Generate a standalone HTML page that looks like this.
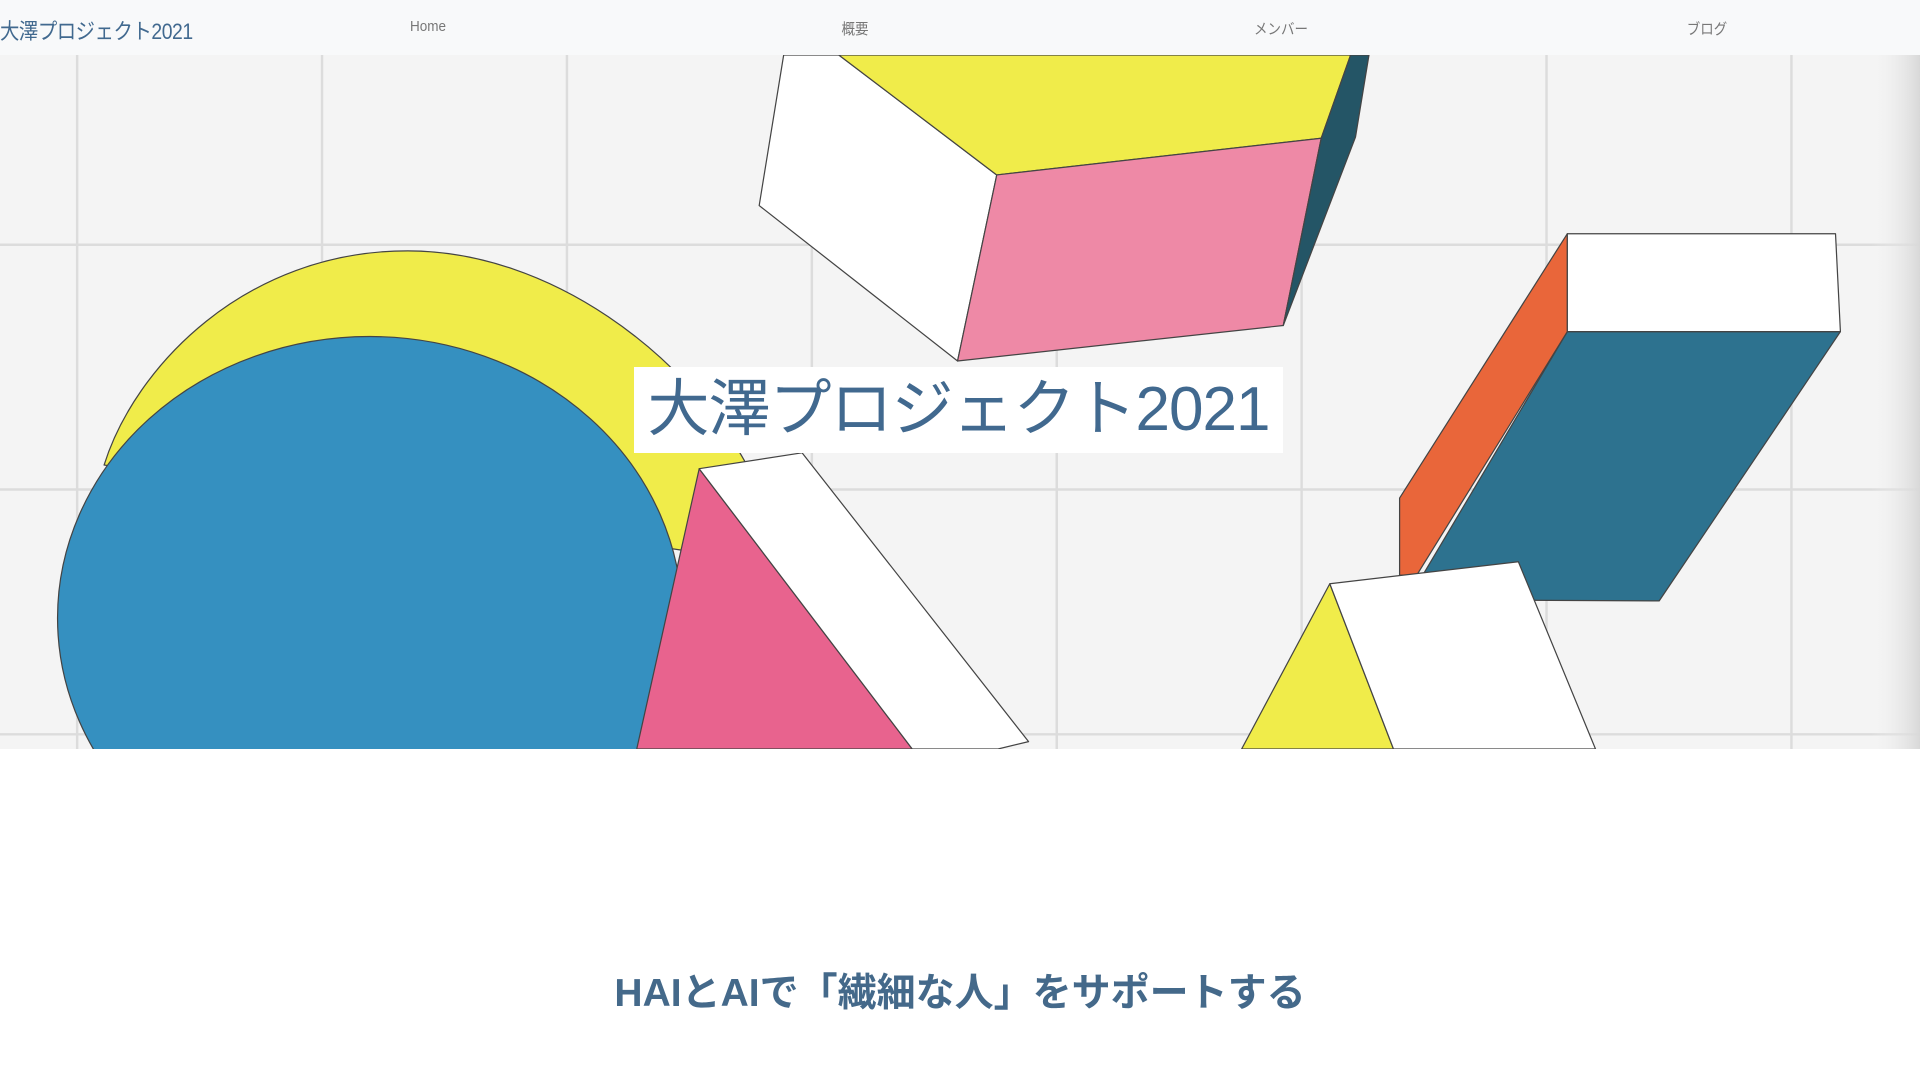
<!DOCTYPE html>
<html><head><meta charset="utf-8"><style>
*{margin:0;padding:0;box-sizing:border-box}
body{width:1920px;height:1080px;background:#fff;font-family:"Liberation Sans","Noto Sans CJK JP",sans-serif;overflow:hidden;position:relative}
nav{position:absolute;top:0;left:0;width:1920px;height:55px;background:#f8f9fa}
.logo{position:absolute;left:0;top:14px;font-size:22px;color:#41698f;letter-spacing:-0.5px;transform:scaleX(0.88);transform-origin:0 0}
.ni{position:absolute;top:18px;font-size:15px;color:#777;transform:translateX(-50%) scaleX(0.9)}
.hero{position:absolute;top:55px;left:0;width:1920px;height:694px}
.title{position:absolute;left:634px;top:367px;width:649px;height:86px;background:#fff;color:#41698f;font-size:62px;line-height:86px;text-align:center;letter-spacing:-1px}
.sub{position:absolute;left:0;width:1920px;top:962px;text-align:center;font-size:39px;font-weight:bold;color:#44698a}
</style></head><body>
<nav>
<div class="logo">大澤プロジェクト2021</div>
<div class="ni" style="left:428px">Home</div>
<div class="ni" style="left:855px">概要</div>
<div class="ni" style="left:1281px">メンバー</div>
<div class="ni" style="left:1707px">ブログ</div>
</nav>
<svg class="hero" viewBox="0 45 1568 567" preserveAspectRatio="none" width="1920" height="694">
<defs><linearGradient id="sh" x1="0" x2="1"><stop offset="0" stop-color="#f4f4f4" stop-opacity="0"/><stop offset="1" stop-color="#d8d8d8"/></linearGradient></defs>
<rect x="0" y="45" width="1568" height="567" fill="#f4f4f4"/>
<g stroke="#dcdcdc" stroke-width="2">
<line x1="63" y1="45" x2="63" y2="612"/><line x1="263" y1="45" x2="263" y2="612"/><line x1="463" y1="45" x2="463" y2="612"/><line x1="663" y1="45" x2="663" y2="612"/><line x1="863" y1="45" x2="863" y2="612"/><line x1="1063" y1="45" x2="1063" y2="612"/><line x1="1263" y1="45" x2="1263" y2="612"/><line x1="1463" y1="45" x2="1463" y2="612"/>
<line x1="0" y1="200" x2="1568" y2="200"/><line x1="0" y1="400" x2="1568" y2="400"/><line x1="0" y1="600" x2="1568" y2="600"/>
</g>
<g stroke="#444" stroke-width="1" stroke-linejoin="round">
<polygon points="640,45 620,168 782,295 814,143 685,45" fill="#fff"/>
<polygon points="685,45 814,143 1079,113 1103,45" fill="#f0ec4a"/>
<polygon points="814,143 1079,113 1048,266 782,295" fill="#ee89a6"/>
<polygon points="1103,45 1118,45 1107,112 1048,266 1079,113" fill="#245566"/>
<path d="M85,380 C110,300 200,205 333,205 C450,205 560,290 610,380 L560,450 Z" fill="#f0ec4a"/>
<ellipse cx="302" cy="505" rx="255" ry="230" fill="#3590c0"/>
<polygon points="571,383 520,612 745,612" fill="#e8638e"/>
<polygon points="571,383 655,370 840,606 815,612 745,612" fill="#fff"/>
<polygon points="1280,271 1503,271 1355,491 1150,490" fill="#2d728f"/>
<polygon points="1280,191 1143,407 1143,470 1157,470 1280,271" fill="#e9663a"/>
<polygon points="1280,191 1499,191 1503,271 1280,271" fill="#fff"/>
<polygon points="1086,477 1014,612 1138,612" fill="#f0ec4a"/>
<polygon points="1086,477 1240,459 1303,612 1138,612" fill="#fff"/>
</g>
<rect x="1528" y="45" width="40" height="567" fill="url(#sh)"/>
</svg>
<div class="title">大澤プロジェクト2021</div>
<div class="sub">HAIとAIで「繊細な人」をサポートする</div>
</body></html>
